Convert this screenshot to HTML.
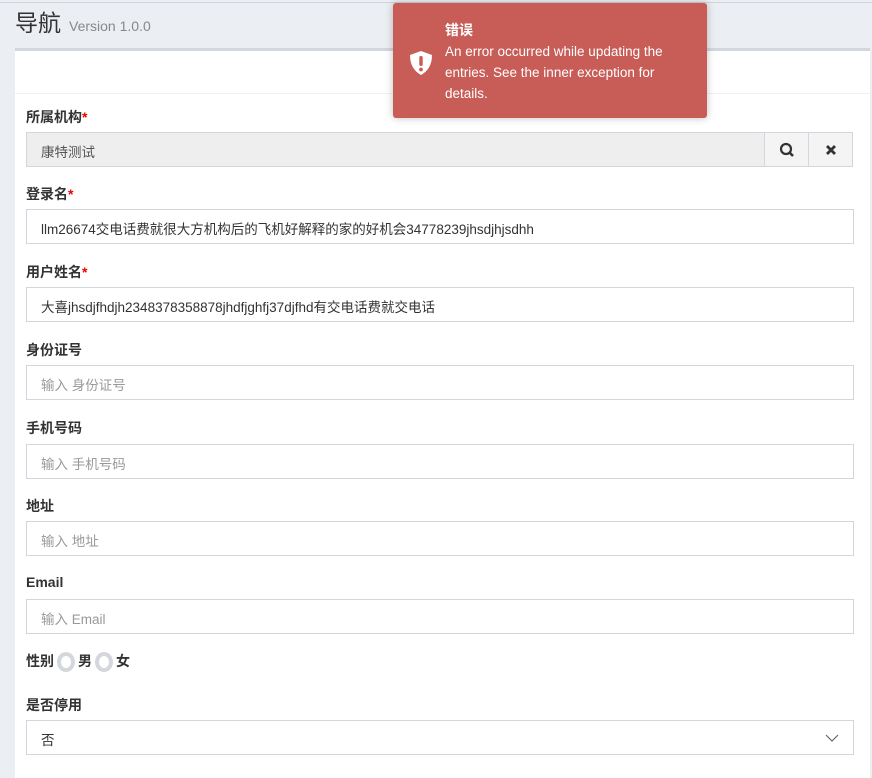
<!DOCTYPE html>
<html><head><meta charset="utf-8"><style>
*{box-sizing:border-box;margin:0;padding:0}
body{width:872px;height:767px;overflow:hidden;background:#ebeef3;font-family:"Liberation Sans","Noto Sans CJK SC",sans-serif;position:relative}
.topline{position:absolute;left:0;top:2px;width:872px;height:1px;background:#d0d4da}
.title{position:absolute;left:15px;top:4px;font-size:23px;color:#333}
.title small{font-size:14px;color:#888;margin-left:8px}
.card{position:absolute;left:15px;top:48px;width:855px;height:730px;background:#fff;border-top:3px solid #d2d6de}
.hline{position:absolute;left:15px;top:93px;width:855px;height:1px;background:#f0f0f0}
.lbl{position:absolute;left:26px;font-size:14px;font-weight:bold;color:#333}
.lbl i{color:#e00;font-style:normal}
.inp{position:absolute;left:26px;width:828px;height:35px;border:1px solid #d2d6de;font-size:13.5px;color:#333;padding:8px 14px;background:#fff}
.ph{color:#999}
.toast{position:absolute;left:393px;top:3px;width:314px;height:115px;background:#c85c57;border-radius:3px;box-shadow:0 0 8px rgba(0,0,0,.25);color:#fff}
.toast b{position:absolute;left:52px;top:17px;font-size:14px}
.toast p{position:absolute;left:52px;top:38px;width:250px;font-size:13.5px;line-height:21px}
.btn{position:absolute;top:132px;width:45px;height:35px;border:1px solid #d2d6de;background:#f4f4f4}
.radio{display:inline-block;width:18px;height:20px;border:4px solid #d4d8dc;border-radius:50%;vertical-align:middle;margin:0 3px}
</style></head><body>
<div class="topline"></div>
<div class="title">导航<small>Version 1.0.0</small></div>
<div class="card"></div>
<div class="hline"></div>

<div class="lbl" style="top:107px">所属机构<i>*</i></div>
<div class="inp" style="top:132px;width:740px;background:#eee;color:#555">康特测试</div>
<div class="btn" style="left:764px"><svg width="45" height="35" viewBox="0 0 45 35"><circle cx="21" cy="16" r="5" fill="none" stroke="#333" stroke-width="2.2"/><line x1="24.5" y1="19.5" x2="28" y2="23" stroke="#333" stroke-width="2.6"/></svg></div>
<div class="btn" style="left:808px"><svg width="45" height="35" viewBox="0 0 45 35"><path d="M18 13L26 21M26 13L18 21" stroke="#333" stroke-width="2.8"/></svg></div>

<div class="lbl" style="top:184px">登录名<i>*</i></div>
<div class="inp" style="top:209px">llm26674交电话费就很大方机构后的飞机好解释的家的好机会34778239jhsdjhjsdhh</div>
<div class="lbl" style="top:262px">用户姓名<i>*</i></div>
<div class="inp" style="top:287px">大喜jhsdjfhdjh2348378358878jhdfjghfj37djfhd有交电话费就交电话</div>
<div class="lbl" style="top:340px">身份证号</div>
<div class="inp ph" style="top:365px">输入 身份证号</div>
<div class="lbl" style="top:418px">手机号码</div>
<div class="inp ph" style="top:444px">输入 手机号码</div>
<div class="lbl" style="top:496px">地址</div>
<div class="inp ph" style="top:521px">输入 地址</div>
<div class="lbl" style="top:574px">Email</div>
<div class="inp ph" style="top:599px">输入 Email</div>
<div class="lbl" style="top:651px">性别<span class="radio"></span>男<span class="radio"></span>女</div>
<div class="lbl" style="top:695px">是否停用</div>
<div class="inp" style="top:720px">否<svg style="position:absolute;right:14px;top:12px" width="14" height="10"><path d="M1 2L7 8L13 2" fill="none" stroke="#666" stroke-width="1.2"/></svg></div>

<div class="toast">
<svg style="position:absolute;left:16px;top:47px" width="24" height="26" viewBox="0 0 24 26"><path d="M12 1L23 5C23 15 19 21 12 25C5 21 1 15 1 5Z" fill="#fff"/><rect x="10.3" y="6" width="3.4" height="10" rx="1.5" fill="#c85c57"/><circle cx="12" cy="19.5" r="1.9" fill="#c85c57"/></svg>
<b>错误</b>
<p>An error occurred while updating the entries. See the inner exception for details.</p>
</div>
</body></html>
